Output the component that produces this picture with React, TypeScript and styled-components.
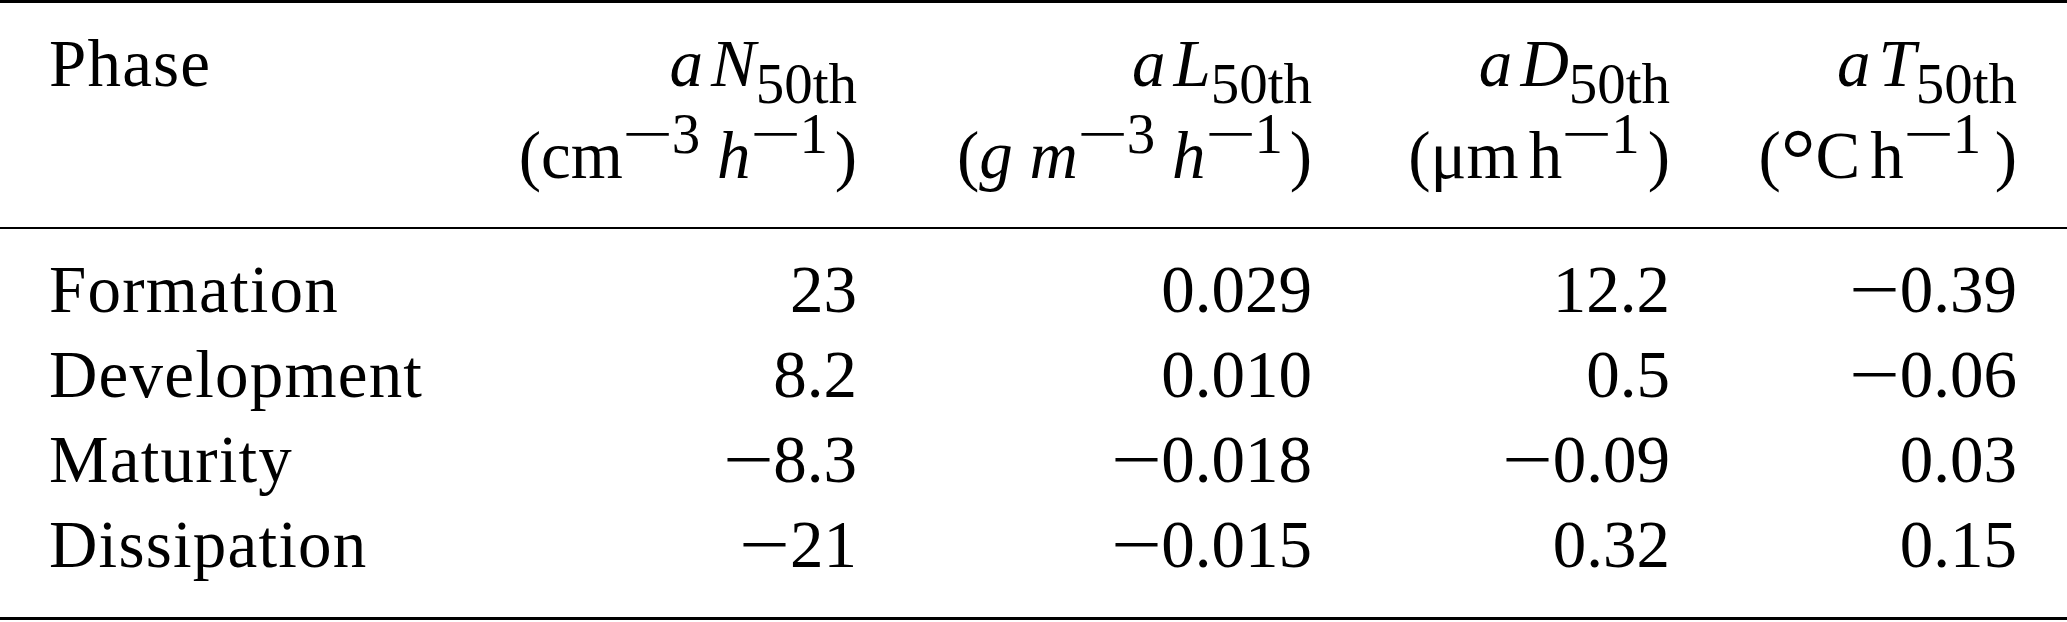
import React from "react";
import styled, { createGlobalStyle } from "styled-components";

type Align = "left" | "right";

const rows = [
  { phase: "Formation", values: ["23", "0.029", "12.2", "−0.39"] },
  { phase: "Development", values: ["8.2", "0.010", "0.5", "−0.06"] },
  { phase: "Maturity", values: ["−8.3", "−0.018", "−0.09", "0.03"] },
  { phase: "Dissipation", values: ["−21", "−0.015", "0.32", "0.15"] },
];

const GlobalStyle = createGlobalStyle`
  html, body {
    margin: 0;
    padding: 0;
    background: #ffffff;
  }
`;

// superscript power with a wide math minus
const Power = ({ n }: { n: string }) => (
  <Sup>
    <Minus wide>−</Minus>
    {n}
  </Sup>
);

// number with a TeX-like wide minus
const Value = ({ v }: { v: string }) =>
  v.startsWith("−") ? (
    <>
      <Minus>−</Minus>
      {v.slice(1)}
    </>
  ) : (
    <>{v}</>
  );

const App = () => {
  return (
    <>
      <GlobalStyle />
      <StyledTable>
        <StyledHead>
          <StyledCell align="left">
            <StyledHeadLine>Phase</StyledHeadLine>
          </StyledCell>
          <StyledCell align="right">
            <StyledHeadLine>
              <Var>a</Var>
              <Var gap>N</Var>
              <Sub>50th</Sub>
            </StyledHeadLine>
            <StyledHeadLine>
              (cm<Power n="3" /> <Var>h</Var>
              <Power n="1" />
              <Thin size={0.1} />)
            </StyledHeadLine>
          </StyledCell>
          <StyledCell align="right">
            <StyledHeadLine>
              <Var>a</Var>
              <Var gap>L</Var>
              <Sub>50th</Sub>
            </StyledHeadLine>
            <StyledHeadLine>
              (<Var>g</Var> <Var>m</Var>
              <Power n="3" /> <Var>h</Var>
              <Power n="1" />
              <Thin size={0.1} />)
            </StyledHeadLine>
          </StyledCell>
          <StyledCell align="right">
            <StyledHeadLine>
              <Var>a</Var>
              <Var gap>D</Var>
              <Sub>50th</Sub>
            </StyledHeadLine>
            <StyledHeadLine>
              (μm<Thin size={0.15} />h<Power n="1" />
              <Thin size={0.12} />)
            </StyledHeadLine>
          </StyledCell>
          <StyledCell align="right">
            <StyledHeadLine>
              <Var>a</Var>
              <Var gap>T</Var>
              <Sub>50th</Sub>
            </StyledHeadLine>
            <StyledHeadLine>
              (<Degree>°</Degree>C<Thin size={0.15} />h<Power n="1" />
              <Thin size={0.2} />)
            </StyledHeadLine>
          </StyledCell>
        </StyledHead>
        <StyledBody>
          {rows.map((row) => (
            <StyledRow key={row.phase}>
              <StyledCell align="left">{row.phase}</StyledCell>
              {row.values.map((v, i) => (
                <StyledCell align="right" key={i}>
                  <Value v={v} />
                </StyledCell>
              ))}
            </StyledRow>
          ))}
        </StyledBody>
      </StyledTable>
    </>
  );
};

export default App;

const columns = "451px 357px 455px 358px 347px";

const StyledTable = styled.div`
  width: 2067px;
  box-sizing: border-box;
  border-top: 3px solid #000;
  border-bottom: 3px solid #000;
  font-family: "Liberation Serif", "Times New Roman", serif;
  font-size: 67px;
  color: #000;
`;

const StyledHead = styled.div`
  display: grid;
  grid-template-columns: ${columns};
  padding: 14px 50px 26px 49px;
  border-bottom: 2px solid #000;
`;

const StyledHeadLine = styled.div`
  height: 92px;
  line-height: 92px;
  white-space: nowrap;
`;

const StyledBody = styled.div`
  padding: 18px 50px 30px 49px;
`;

const StyledRow = styled.div`
  display: grid;
  grid-template-columns: ${columns};
  line-height: 85px;
`;

const StyledCell = styled.div<{ align: Align }>`
  text-align: ${(props) => props.align};
  letter-spacing: ${(props) => (props.align === "left" ? "1.2px" : "0")};
  white-space: nowrap;
`;

const Var = styled.i<{ gap?: boolean }>`
  font-style: italic;
  margin-left: ${(props) => (props.gap ? "0.12em" : "0")};
`;

const Sub = styled.span`
  font-size: 0.85em;
  line-height: 0.8;
  vertical-align: -0.3em;
`;

const Sup = styled.span`
  font-size: 0.85em;
  line-height: 0.8;
  vertical-align: 0.44em;
`;

const Minus = styled.span<{ wide?: boolean }>`
  display: inline-block;
  width: ${(props) => (props.wide ? "0.86em" : "0.74em")};
  text-align: center;
  transform: scaleX(${(props) => (props.wide ? 1.6 : 1.35)});
`;

const Degree = styled.span`
  font-size: 1.3em;
  line-height: 0.5;
  vertical-align: -0.12em;
`;

const Thin = styled.span<{ size: number }>`
  display: inline-block;
  width: ${(props) => props.size}em;
`;
